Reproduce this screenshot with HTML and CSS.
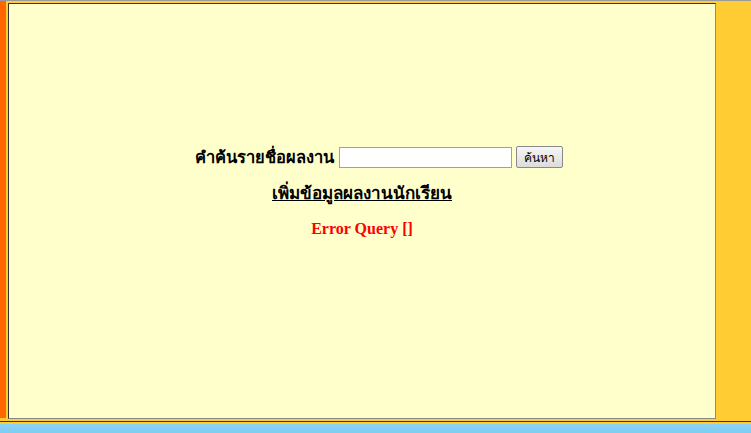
FILE: index.html
```html
<!DOCTYPE html>
<html lang="th">
<head>
  <meta charset="UTF-8" />
  <title>ผลงานนักเรียน</title>
  <link rel="stylesheet" href="styles.css">
</head>
<body>
  <div class="topline"></div>
  <div class="frame">
    <div class="side"></div>
    <div class="main">
      <form class="search-row">
        <span class="search-label">คำค้นรายชื่อผลงาน</span>
        <input type="text" class="search-box" />
        <button type="button" class="search-btn">ค้นหา</button>
      </form>
      <p class="add-link"><a href="#">เพิ่มข้อมูลผลงานนักเรียน</a></p>
      <p class="error">Error Query []</p>
    </div>
  </div>
  <div class="bottom">
    <div class="bottom-line"></div>
    <div class="taskbar"></div>
  </div>
</body>
</html>
```

FILE: styles.css
```css
body {
  margin: 0;
  height: 433px;
  overflow: hidden;
  background: #ffcc33;
  font-family: 'Liberation Serif', 'DejaVu Serif', serif;
}

.topline {
  height: 1px;
  background: #9a9a9a;
}

.frame {
  display: flex;
  align-items: flex-start;
  height: 417px;
}

.side {
  width: 6px;
  height: 417px;
  background: #ff6600;
}

.main {
  box-sizing: border-box;
  width: 708px;
  height: 416px;
  margin: 2px 0 0 2px;
  border: 1px solid;
  border-color: #333 #8a8a8a #8a8a8a #333;
  background: #ffffcc;
  display: flex;
  flex-direction: column;
  align-items: center;
  padding-top: 140px;
}

.search-row {
  display: flex;
  align-items: center;
  gap: 4px;
  margin: 0 0 0 34px;
}

.search-label {
  font-weight: bold;
  font-size: 16.5px;
  color: #000;
  margin-right: 1px;
}

.search-box {
  box-sizing: border-box;
  width: 173px;
  height: 21px;
  border: 1px solid #a0a0a0;
  background: #fff;
  padding: 1px 3px;
}

.search-btn {
  box-sizing: border-box;
  height: 22px;
  padding: 0 7px;
  border: 1px solid #8a8a8a;
  border-radius: 2px;
  background: linear-gradient(#f6f6f6, #dcdcdc);
  font-family: Tahoma, 'DejaVu Sans', sans-serif;
  font-size: 12px;
  color: #000;
}

.add-link {
  margin: 9px 0 0;
  font-weight: bold;
  font-size: 17px;
}

.add-link a {
  color: #000;
}

.error {
  margin: 14px 0 0;
  font-weight: bold;
  font-size: 16px;
  color: #ff0000;
}

.bottom {
  height: 15px;
  display: flex;
  flex-direction: column;
}

.bottom-line {
  height: 1px;
  margin-top: 3px;
  background: #333;
}

.taskbar {
  flex: 1;
  margin-top: 2px;
  background: linear-gradient(#8ed3f5, #7ccdf3);
}
```
